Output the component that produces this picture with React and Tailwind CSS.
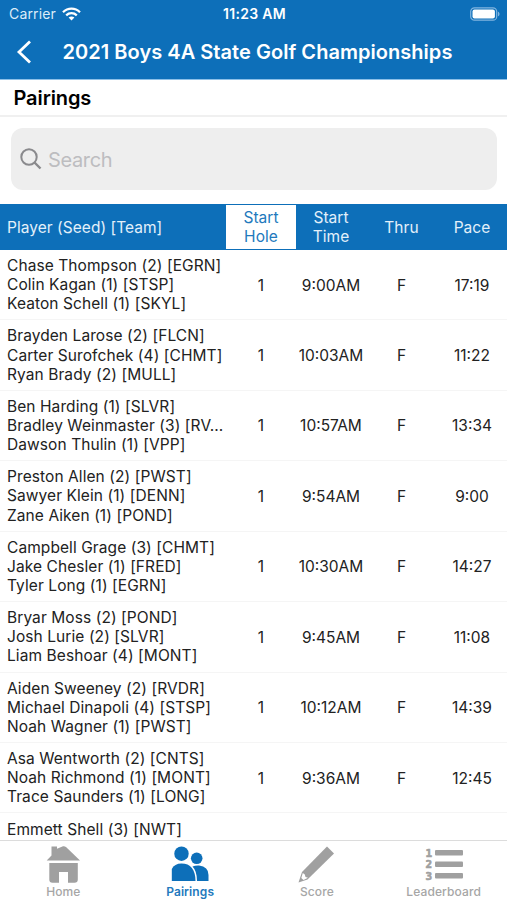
const PAIRINGS = [
  { players: ['Chase Thompson (2) [EGRN]', 'Colin Kagan (1) [STSP]', 'Keaton Schell (1) [SKYL]'], time: '9:00AM', pace: '17:19' },
  { players: ['Brayden Larose (2) [FLCN]', 'Carter Surofchek (4) [CHMT]', 'Ryan Brady (2) [MULL]'], time: '10:03AM', pace: '11:22' },
  { players: ['Ben Harding (1) [SLVR]', 'Bradley Weinmaster (3) [RV...', 'Dawson Thulin (1) [VPP]'], time: '10:57AM', pace: '13:34' },
  { players: ['Preston Allen (2) [PWST]', 'Sawyer Klein (1) [DENN]', 'Zane Aiken (1) [POND]'], time: '9:54AM', pace: '9:00' },
  { players: ['Campbell Grage (3) [CHMT]', 'Jake Chesler (1) [FRED]', 'Tyler Long (1) [EGRN]'], time: '10:30AM', pace: '14:27' },
  { players: ['Bryar Moss (2) [POND]', 'Josh Lurie (2) [SLVR]', 'Liam Beshoar (4) [MONT]'], time: '9:45AM', pace: '11:08' },
  { players: ['Aiden Sweeney (2) [RVDR]', 'Michael Dinapoli (4) [STSP]', 'Noah Wagner (1) [PWST]'], time: '10:12AM', pace: '14:39' },
  { players: ['Asa Wentworth (2) [CNTS]', 'Noah Richmond (1) [MONT]', 'Trace Saunders (1) [LONG]'], time: '9:36AM', pace: '12:45' },
];

const COLUMNS = 'grid grid-cols-[226px_70px_70px_71px_70px]';

function StatusBar() {
  return (
    <div className="grid h-7 grid-cols-3 items-center pl-[9px] pr-[7px] text-[14px] leading-none text-white">
      <div className="flex items-center gap-[6px] text-[#dcecf8]">
        <span className="tracking-[0.15px]">Carrier</span>
        <svg width="19" height="14" viewBox="0 0 19 14" fill="none" stroke="white" strokeWidth="2.3">
          <path d="M1 5.2C5.8.5 13.2.5 18 5.2" />
          <path d="M4.2 8.3c3-2.8 7.6-2.8 10.6 0" />
          <path d="M9.5 13.5 6.6 10.6c1.7-1.4 4.1-1.4 5.8 0Z" fill="white" stroke="none" />
        </svg>
      </div>
      <div className="text-center font-semibold tracking-[0.3px] whitespace-nowrap">11:23 AM</div>
      <div className="flex justify-end">
        <svg width="30" height="14" viewBox="0 0 30 14">
          <rect x=".7" y=".8" width="26" height="12.4" rx="3.8" fill="none" stroke="#81b5df" strokeWidth="1.2" />
          <rect x="2.5" y="2.6" width="22.4" height="8.8" rx="2" fill="white" />
          <path d="M28 4.7c2 .7 2 3.9 0 4.6Z" fill="#81b5df" />
        </svg>
      </div>
    </div>
  );
}

function NavBar() {
  return (
    <div className="flex h-[52px] items-center border-b border-[#8cc0e8] pl-[16px] pb-[3px]">
      <svg width="16" height="24" viewBox="0 0 16 24" fill="none" stroke="white" strokeWidth="2.8">
        <path d="M14 1.5 3 12l11 10.5" />
      </svg>
      <h1 className="ml-[30.5px] text-[20px] font-semibold tracking-[0.04px] whitespace-nowrap text-white">2021 Boys 4A State Golf Championships</h1>
    </div>
  );
}

function SearchBox() {
  return (
    <div className="mt-[11px] mr-[10px] mb-[14px] ml-[11px] flex h-[62px] items-center rounded-[12px] bg-[#eeeeee] pl-[9px]">
      <svg width="22" height="22" viewBox="0 0 22 22" fill="none" stroke="#8a8a8d" strokeWidth="2">
        <circle cx="9" cy="9" r="7.7" />
        <path d="m14.5 14.5 6 6" strokeWidth="2.4" />
      </svg>
      <span className="ml-[6px] pt-[1px] text-[20px] tracking-[-0.35px] text-[#bdbdc0]">Search</span>
    </div>
  );
}

function TableHeader() {
  return (
    <div className={`${COLUMNS} h-[46px] shrink-0 items-center bg-[#0d6fb9] text-center text-[15.5px] leading-[19px] tracking-[0.04px] text-[#e3f0fa]`}>
      <div className="pl-[7px] text-left">Player (Seed) [Team]</div>
      <div className="flex h-[44px] items-center justify-center bg-white text-[#2279bd]">Start<br />Hole</div>
      <div>Start<br />Time</div>
      <div>Thru</div>
      <div>Pace</div>
    </div>
  );
}

function PairingRow({ players, time, pace }) {
  return (
    <div className={`${COLUMNS} h-[70.43px] shrink-0 items-center border-b border-[#f5f5f5] text-center`}>
      <div className="pl-[7px] text-left leading-[19.1px] tracking-[0.08px] whitespace-nowrap">
        {players.map((player) => <div key={player}>{player}</div>)}
      </div>
      <div className="pt-[1px]">1</div>
      <div className="pt-[1px]">{time}</div>
      <div className="pt-[1px]">F</div>
      <div className="pt-[1px]">{pace}</div>
    </div>
  );
}

function HomeIcon() {
  return (
    <svg className="ml-[1px]" width="35" height="37" viewBox="0 0 35 37" fill="#a0a0a0">
      <path d="M5.500.5h5.500v2.300L17 .3q1.500-.5 3 .8L34 14.500H.7l4.800-5Z" />
      <path d="M3.300 17h28.500v16.500q0 3.200-3.300 3.200H22V26H13v10.700H6.500q-3.200 0-3.200-3.200Z" />
    </svg>
  );
}

function PairingsIcon() {
  return (
    <svg width="38" height="36" viewBox="0 0 38 36" fill="#0d6fb9">
      <circle cx="10.5" cy="7.7" r="7.2" />
      <circle cx="25.7" cy="12.3" r="5.800" />
      <path d="M.8 35V23q2.700-5.500 9.700-5.500c9 0 14 6 14 17.500Z" />
      <path d="M21.500 20.500q3-1.200 6.500-1 9.500 1 9.500 9.500v6H26q0-10-4.500-14.500Z" />
    </svg>
  );
}

function ScoreIcon() {
  return (
    <svg width="37" height="37" viewBox="0 0 37 37">
      <path d="m29 .5 7 7L9.500 33.500.5 36.500 4 26Z" fill="#a0a0a0" />
      <path d="m4.800 27 2 1.500.7 2.500 2.500.7-4.500 2.300-2.200-2Z" fill="white" />
    </svg>
  );
}

function LeaderboardIcon() {
  return (
    <svg width="38" height="40" viewBox="0 -3 38 40" fill="#a0a0a0">
      <g fontFamily="DejaVu Sans Mono, monospace" fontSize="11" fontWeight="700" stroke="#a0a0a0" strokeWidth="0.6">
        <text x="0.500" y="9.500">1</text>
        <text x="0.500" y="21">2</text>
        <text x="0.500" y="32.500">3</text>
      </g>
      <rect x="10" y="3" width="28" height="5.500" rx="1" />
      <rect x="10" y="14.500" width="28" height="5.500" rx="1" />
      <rect x="10" y="26" width="28" height="5.500" rx="1" />
    </svg>
  );
}

function Tab({ icon, label, active }) {
  return (
    <div className={`flex flex-col items-center ${active ? 'font-semibold text-[#2279bd]' : 'font-medium text-[#a6a6a6]'}`}>
      <div className="flex h-[44px] items-center pt-[2px]">{icon}</div>
      <span className="text-[12px] leading-[14px] tracking-[0.1px]">{label}</span>
    </div>
  );
}

export default function App() {
  return (
    <div className="flex h-[900px] w-[507px] flex-col overflow-hidden bg-white font-['Inter','Liberation_Sans',sans-serif] text-[15.5px] text-[#222222]">
      <header className="shrink-0 bg-[#0d6fb9]">
        <StatusBar />
        <NavBar />
      </header>
      <h2 className="flex h-[37px] shrink-0 items-center border-b-2 border-[#f0f0f0] pl-[13.500px] text-[20px] font-semibold tracking-[-0.1px] text-black">Pairings</h2>
      <SearchBox />
      <TableHeader />
      <main className="flex min-h-0 flex-1 flex-col overflow-hidden">
        {PAIRINGS.map((pairing) => <PairingRow key={pairing.players[0]} {...pairing} />)}
        <div className="pt-[6.500px] pl-[7px] leading-[19.1px] tracking-[0.08px]">Emmett Shell (3) [NWT]</div>
      </main>
      <nav className="grid h-[60px] shrink-0 grid-cols-4 border-t border-[#dcdcdc]">
        <Tab icon={<HomeIcon />} label="Home" />
        <Tab icon={<PairingsIcon />} label="Pairings" active />
        <Tab icon={<ScoreIcon />} label="Score" />
        <Tab icon={<LeaderboardIcon />} label="Leaderboard" />
      </nav>
    </div>
  );
}
